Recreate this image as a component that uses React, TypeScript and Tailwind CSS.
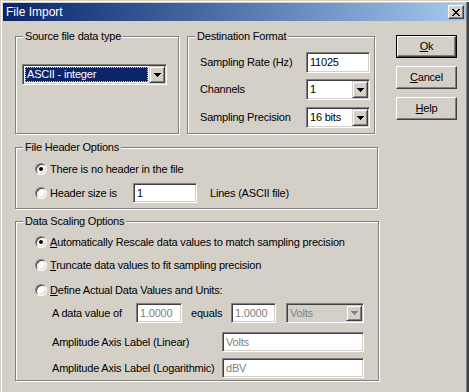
import React from 'react';

const sunken =
  'border border-t-[#808080] border-l-[#808080] border-b-white border-r-white shadow-[inset_1px_1px_0_#404040,inset_-1px_-1px_0_#d4d0c8]';
const raised =
  'border border-t-white border-l-white border-b-[#404040] border-r-[#404040] shadow-[inset_-1px_-1px_0_#808080]';

function Group({ title, className, children }: { title: string; className: string; children?: React.ReactNode }) {
  return (
    <div className={`relative border border-[#808080] shadow-[1px_1px_0_#fff,inset_1px_1px_0_#fff] ${className}`}>
      <span className="absolute left-[7px] top-[-8px] bg-[#d4d0c8] px-[2px] leading-[14px] whitespace-nowrap">{title}</span>
      {children}
    </div>
  );
}

function Arrow({ disabled }: { disabled?: boolean }) {
  return (
    <svg width="7" height="4" viewBox="0 0 7 4">
      <path d="M0 0h7v1H0zM1 1h5v1H1zM2 2h3v1H2zM3 3h1v1H3z" fill={disabled ? '#808080' : '#000'} />
    </svg>
  );
}

function Combo({ value, className, disabled }: { value: string; className: string; disabled?: boolean }) {
  return (
    <div className={`flex ${sunken} ${disabled ? 'bg-[#d4d0c8]' : 'bg-white'} p-[1px] ${className}`}>
      <div className={`flex-1 flex items-center pl-[2px] whitespace-nowrap ${disabled ? 'text-[#808080]' : ''}`}>{value}</div>
      <div className="w-[16px] flex items-center justify-center border border-t-[#d4d0c8] border-l-[#d4d0c8] border-b-[#404040] border-r-[#404040] shadow-[inset_1px_1px_0_#fff,inset_-1px_-1px_0_#808080] bg-[#d4d0c8]">
        <Arrow disabled={disabled} />
      </div>
    </div>
  );
}

function Field({ value, className, disabled }: { value: string; className: string; disabled?: boolean }) {
  return (
    <div className={`flex items-center ${sunken} bg-white pl-[3px] whitespace-nowrap ${disabled ? 'text-[#808080]' : ''} ${className}`}>
      {value}
    </div>
  );
}

function Radio({ checked, children }: { checked?: boolean; children: React.ReactNode }) {
  return (
    <div className="flex items-center h-[16px] whitespace-nowrap">
      <div className={`w-[12px] h-[12px] rounded-full flex items-center justify-center bg-white ${sunken}`}>
        {checked && <div className="w-[4px] h-[4px] rounded-full bg-black" />}
      </div>
      <span className="ml-[3px]">{children}</span>
    </div>
  );
}

function Button({ children, isDefault }: { children: React.ReactNode; isDefault?: boolean }) {
  if (isDefault) {
    return (
      <div className="w-[61px] h-[23px] border border-black flex">
        <div className={`flex-1 flex items-center justify-center ${raised}`}>{children}</div>
      </div>
    );
  }
  return <div className={`w-[61px] h-[23px] flex items-center justify-center ${raised}`}>{children}</div>;
}

export default function App() {
  return (
    <div className="w-[469px] h-[392px] overflow-hidden bg-[#d4d0c8] font-['Liberation_Sans',Arial,sans-serif] text-[11px] tracking-[-0.2px] text-black pt-[3px] pl-[3px] pr-[3px] shadow-[inset_1px_1px_0_#d4d0c8,inset_2px_2px_0_#fff,inset_-1px_0_0_#404040,inset_-2px_0_0_#404040,inset_-3px_0_0_#808080]">
      {/* Title bar */}
      <div className="h-[18px] flex items-center bg-gradient-to-r from-[#0a246a] to-[#a6caf0] pl-[3px] pr-[2px]">
        <span className="text-white text-[12px] tracking-normal flex-1">File Import</span>
        <div className={`w-[16px] h-[14px] flex items-center justify-center bg-[#d4d0c8] ${raised}`}>
          <svg width="8" height="7" viewBox="0 0 8 7">
            <path d="M0 0h2v1H0zM6 0h2v1H6zM1 1h2v1H1zM5 1h2v1H5zM2 2h4v1H2zM3 3h2v1H3zM2 4h4v1H2zM1 5h2v1H1zM5 5h2v1H5zM0 6h2v1H0zM6 6h2v1H6z" fill="#000" />
          </svg>
        </div>
      </div>

      <div className="pl-[12px]">
        {/* Row 1 */}
        <div className="flex items-start mt-[15px]">
          <Group title="Source file data type" className="w-[164px] h-[98px]">
            <div className="ml-[6px] mt-[27px]">
              <div className={`flex w-[145px] h-[21px] ${sunken} bg-white p-[1px]`}>
                <div className="flex-1 p-[1px]">
                  <div className="h-full bg-[#0a246a] text-white flex items-center pl-[1px] border border-dotted border-[#e0d080]">ASCII - integer</div>
                </div>
                <div className="w-[16px] flex items-center justify-center border border-t-[#d4d0c8] border-l-[#d4d0c8] border-b-[#404040] border-r-[#404040] shadow-[inset_1px_1px_0_#fff,inset_-1px_-1px_0_#808080] bg-[#d4d0c8]">
                  <Arrow />
                </div>
              </div>
            </div>
          </Group>

          <Group title="Destination Format" className="ml-[8px] w-[188px] h-[98px]">
            <div className="pl-[12px] pt-[15px]">
              <div className="flex items-center">
                <span className="w-[106px]">Sampling Rate (Hz)</span>
                <Field value="11025" className="w-[64px] h-[21px]" />
              </div>
              <div className="flex items-center mt-[6px]">
                <span className="w-[106px]">Channels</span>
                <Combo value="1" className="w-[64px] h-[21px]" />
              </div>
              <div className="flex items-center mt-[7px]">
                <span className="w-[106px]">Sampling Precision</span>
                <Combo value="16 bits" className="w-[64px] h-[21px]" />
              </div>
            </div>
          </Group>

          <div className="ml-[21px] -mt-px flex flex-col gap-[8px]">
            <Button isDefault>
              <span className="underline">O</span>k
            </Button>
            <Button>
              <span className="underline">C</span>ancel
            </Button>
            <Button>
              <span className="underline">H</span>elp
            </Button>
          </div>
        </div>

        {/* File Header Options */}
        <Group title="File Header Options" className="mt-[13px] w-[363px] h-[62px]">
          <div className="pl-[19px] pt-[13px]">
            <Radio checked>There is no header in the file</Radio>
            <div className="flex items-center mt-[6px]">
              <div className="w-[98px]">
                <Radio>Header size is</Radio>
              </div>
              <Field value="1" className="w-[64px] h-[20px]" />
              <span className="ml-[13px]">Lines (ASCII file)</span>
            </div>
          </div>
        </Group>

        {/* Data Scaling Options */}
        <Group title="Data Scaling Options" className="mt-[12px] w-[364px] h-[160px]">
          <div className="pl-[19px] pt-[12px]">
            <Radio checked>
              <span className="underline">A</span>utomatically Rescale data values to match sampling precision
            </Radio>
            <div className="mt-[7px]">
              <Radio>
                <span className="underline">T</span>runcate data values to fit sampling precision
              </Radio>
            </div>
            <div className="mt-[9px]">
              <Radio>
                <span className="underline">D</span>efine Actual Data Values and Units:
              </Radio>
            </div>
            <div className="pl-[17px]">
              <div className="flex items-center mt-[5px]">
                <span className="w-[84px]">A data value of</span>
                <Field value="1.0000" disabled className="w-[46px] h-[20px]" />
                <span className="ml-[9px] w-[40px]">equals</span>
                <Field value="1.0000" disabled className="w-[45px] h-[20px]" />
                <Combo value="Volts" disabled className="ml-[10px] w-[78px] h-[20px]" />
              </div>
              <div className="flex items-center mt-[9px]">
                <span className="w-[170px]">Amplitude Axis Label (Linear)</span>
                <Field value="Volts" disabled className="w-[142px] h-[20px]" />
              </div>
              <div className="flex items-center mt-[6px]">
                <span className="w-[170px]">Amplitude Axis Label (Logarithmic)</span>
                <Field value="dBV" disabled className="w-[142px] h-[20px]" />
              </div>
            </div>
          </div>
        </Group>
      </div>
    </div>
  );
}
